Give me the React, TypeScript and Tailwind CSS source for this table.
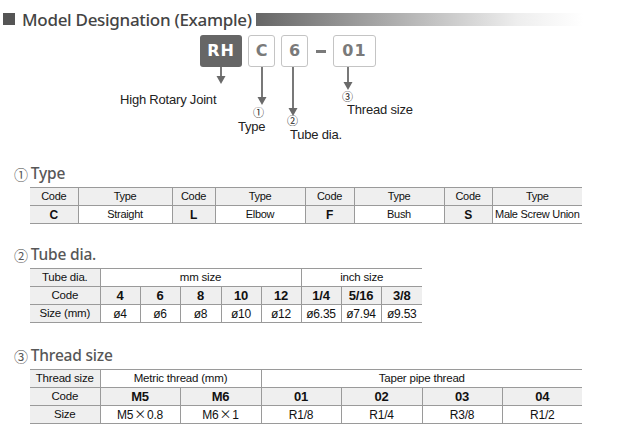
import React from "react";

const cell = "border border-[#9a9a9a] p-0 text-center align-middle h-[18px] leading-none whitespace-nowrap";
const g = "bg-[#efefef]";

function Arrow({ x, len }: { x: number; len: number }) {
  return (
    <svg
      className="absolute"
      style={{ left: x - 5, top: 32 }}
      width={10}
      height={len}
      viewBox={`0 0 10 ${len}`}
    >
      <line x1={5} y1={0} x2={5} y2={len - 7} stroke="#6a6a6a" strokeWidth={1.8} />
      <polygon points={`0.5,${len - 8} 9.5,${len - 8} 5,${len}`} fill="#6a6a6a" />
    </svg>
  );
}

function Title({ n, t }: { n: string; t: string }) {
  return (
    <div className="pl-[14px] h-[18px] flex items-center text-[15.5px] text-[#575757] leading-none font-['Noto_Sans',sans-serif] font-medium tracking-[-0.2px]">
      <span className="text-[14px] mr-[3px] font-['Noto_Sans_CJK_JP',sans-serif] font-normal">{n}</span>
      <span>{t}</span>
    </div>
  );
}

export default function App() {
  return (
    <div className="w-[618px] h-[439px] bg-white overflow-hidden font-['Liberation_Sans','Noto_Sans_CJK_JP',sans-serif] text-[#111]">
      {/* header */}
      <div className="flex items-center pt-[11px] h-[27px]">
        <div className="ml-[3px] w-[12px] h-[12px] bg-[#555]" />
        <div className="ml-[7px] w-[228px] text-[17px] leading-none text-[#444] font-['Noto_Sans',sans-serif] font-medium tracking-[-0.3px] whitespace-nowrap">
          Model Designation (Example)
        </div>
        <div className="ml-[6px] w-[327px] h-[13px] bg-[linear-gradient(to_right,#666_0%,#aaa_40%,#eee_80%,#fff_100%)]" />
      </div>

      {/* diagram */}
      <div className="relative h-[105px] mt-[8px]">
        <div className="flex items-center ml-[200px] gap-[6px] font-['DejaVu_Sans',sans-serif] font-bold text-[16px]">
          <div className="w-[42px] h-[32px] rounded-[3px] bg-[#666] text-white flex items-center justify-center tracking-[1px]">RH</div>
          <div className="w-[27px] h-[32px] rounded-[3px] border border-[#c4c4c4] text-[#7a7a7a] flex items-center justify-center">C</div>
          <div className="w-[27px] h-[32px] rounded-[3px] border border-[#c4c4c4] text-[#7a7a7a] flex items-center justify-center">6</div>
          <div className="w-[13px] h-[32px] flex items-center justify-center">
            <div className="w-[10px] h-[3px] bg-[#7a7a7a]" />
          </div>
          <div className="w-[43px] h-[32px] rounded-[3px] border border-[#c4c4c4] text-[#7a7a7a] flex items-center justify-center tracking-[1px]">01</div>
        </div>
        <Arrow x={221} len={17} />
        <Arrow x={262} len={38} />
        <Arrow x={293} len={49} />
        <Arrow x={348} len={23} />
        <div className="absolute left-[120px] top-[57px] text-[13px] leading-[15px] tracking-[-0.2px] text-[#222]">High Rotary Joint</div>
        <div className="absolute left-[253px] top-[72px] text-[11px] leading-[11px] text-[#222] font-['Noto_Sans_CJK_JP',sans-serif]">①</div>
        <div className="absolute left-[238px] top-[84px] text-[13px] leading-[15px] tracking-[-0.2px] text-[#222]">Type</div>
        <div className="absolute left-[287px] top-[80px] text-[11px] leading-[11px] text-[#222] font-['Noto_Sans_CJK_JP',sans-serif]">②</div>
        <div className="absolute left-[290px] top-[92px] text-[13px] leading-[15px] tracking-[-0.2px] text-[#222]">Tube dia.</div>
        <div className="absolute left-[342px] top-[56px] text-[11px] leading-[11px] text-[#222] font-['Noto_Sans_CJK_JP',sans-serif]">③</div>
        <div className="absolute left-[347px] top-[67px] text-[13px] leading-[15px] tracking-[-0.2px] text-[#222]">Thread size</div>
      </div>

      {/* Type */}
      <div className="mt-[25px]">
        <Title n="①" t="Type" />
      </div>
      <table className="ml-[30px] mt-[4px] border-collapse table-fixed text-[11px] tracking-[-0.3px]">
        <colgroup>
          <col className="w-[48px]" />
          <col className="w-[94px]" />
          <col className="w-[43px]" />
          <col className="w-[90px]" />
          <col className="w-[49px]" />
          <col className="w-[90px]" />
          <col className="w-[48px]" />
          <col className="w-[90px]" />
        </colgroup>
        <tbody>
          <tr>
            <td className={`${cell} ${g} border-l-0`}>Code</td>
            <td className={`${cell} ${g}`}>Type</td>
            <td className={`${cell} ${g}`}>Code</td>
            <td className={`${cell} ${g}`}>Type</td>
            <td className={`${cell} ${g}`}>Code</td>
            <td className={`${cell} ${g}`}>Type</td>
            <td className={`${cell} ${g}`}>Code</td>
            <td className={`${cell} ${g} border-r-0`}>Type</td>
          </tr>
          <tr>
            <td className={`${cell} ${g} border-l-0 font-bold text-[12px]`}>C</td>
            <td className={cell}>Straight</td>
            <td className={`${cell} ${g} font-bold text-[12px]`}>L</td>
            <td className={cell}>Elbow</td>
            <td className={`${cell} ${g} font-bold text-[12px]`}>F</td>
            <td className={cell}>Bush</td>
            <td className={`${cell} ${g} font-bold text-[12px]`}>S</td>
            <td className={`${cell} border-r-0`}>Male Screw Union</td>
          </tr>
        </tbody>
      </table>

      {/* Tube dia */}
      <div className="mt-[22px]">
        <Title n="②" t="Tube dia." />
      </div>
      <table className="ml-[30px] mt-[4px] border-collapse table-fixed text-[11.5px] tracking-[-0.2px]">
        <colgroup>
          <col className="w-[70px]" />
          <col className="w-[40px]" />
          <col className="w-[40px]" />
          <col className="w-[41px]" />
          <col className="w-[40px]" />
          <col className="w-[40px]" />
          <col className="w-[40px]" />
          <col className="w-[40px]" />
          <col className="w-[41px]" />
        </colgroup>
        <tbody>
          <tr>
            <td className={`${cell} ${g} border-l-0`}>Tube dia.</td>
            <td className={cell} colSpan={5}>mm size</td>
            <td className={`${cell} border-r-0`} colSpan={3}>inch size</td>
          </tr>
          <tr>
            <td className={`${cell} ${g} border-l-0`}>Code</td>
            {["4", "6", "8", "10", "12", "1/4", "5/16", "3/8"].map((v, i) => (
              <td key={v} className={`${cell} ${g} font-bold text-[13px] ${i === 7 ? "border-r-0" : ""}`}>{v}</td>
            ))}
          </tr>
          <tr>
            <td className={`${cell} ${g} border-l-0`}>Size (mm)</td>
            {["ø4", "ø6", "ø8", "ø10", "ø12", "ø6.35", "ø7.94", "ø9.53"].map((v, i) => (
              <td key={v} className={`${cell} text-[12px] ${i === 7 ? "border-r-0" : ""}`}>{v}</td>
            ))}
          </tr>
        </tbody>
      </table>

      {/* Thread size */}
      <div className="mt-[24px]">
        <Title n="③" t="Thread size" />
      </div>
      <table className="ml-[30px] mt-[4px] border-collapse table-fixed text-[11.5px] tracking-[-0.2px]">
        <colgroup>
          <col className="w-[70px]" />
          <col className="w-[80px]" />
          <col className="w-[81px]" />
          <col className="w-[80px]" />
          <col className="w-[81px]" />
          <col className="w-[80px]" />
          <col className="w-[80px]" />
        </colgroup>
        <tbody>
          <tr>
            <td className={`${cell} ${g} border-l-0`}>Thread size</td>
            <td className={cell} colSpan={2}>Metric thread (mm)</td>
            <td className={`${cell} border-r-0`} colSpan={4}>Taper pipe thread</td>
          </tr>
          <tr>
            <td className={`${cell} ${g} border-l-0`}>Code</td>
            {["M5", "M6", "01", "02", "03", "04"].map((v, i) => (
              <td key={v} className={`${cell} ${g} font-bold text-[13px] ${i === 5 ? "border-r-0" : ""}`}>{v}</td>
            ))}
          </tr>
          <tr>
            <td className={`${cell} ${g} border-l-0`}>Size</td>
            <td className={`${cell} text-[12px]`}>
              M5<span className="font-['Noto_Sans_CJK_JP',sans-serif] mx-[1px]">×</span>0.8
            </td>
            <td className={`${cell} text-[12px]`}>
              M6<span className="font-['Noto_Sans_CJK_JP',sans-serif] mx-[1px]">×</span>1
            </td>
            {["R1/8", "R1/4", "R3/8", "R1/2"].map((v, i) => (
              <td key={v} className={`${cell} text-[12px] ${i === 3 ? "border-r-0" : ""}`}>{v}</td>
            ))}
          </tr>
        </tbody>
      </table>
    </div>
  );
}
